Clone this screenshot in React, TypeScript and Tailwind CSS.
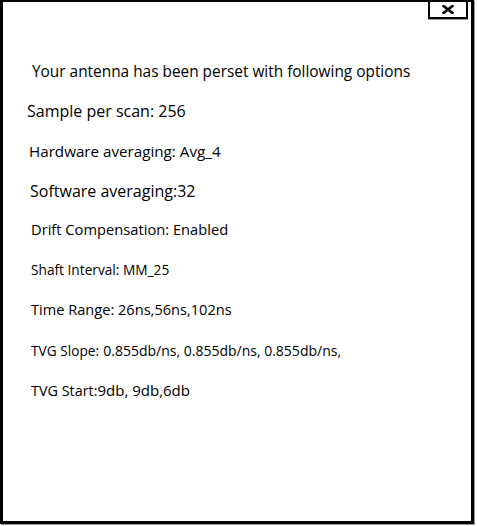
const rows: { text: React.ReactNode; cls: string }[] = [
    { text: "Your antenna has been perset with following options", cls: "h-[38px] pl-[29px] text-[15.4px]" },
    { text: "Sample per scan: 256", cls: "h-[40px] pl-[24px] text-[16px]" },
    { text: "Hardware averaging: Avg_4", cls: "h-[41px] pl-[26px] text-[15.2px]" },
    { text: "Software averaging:32", cls: "h-[38px] pl-[27px] text-[16px]" },
    { text: "Drift Compensation: Enabled", cls: "h-[39px] pl-[28px] text-[14.7px]" },
    { text: "Shaft Interval: MM_25", cls: "h-[42px] pl-[28px] text-[13.7px]" },
    { text: "Time Range: 26ns,56ns,102ns", cls: "h-[38px] pl-[28px] text-[14.6px]" },
    {
        text: (
            <>
                <span className="text-[13.7px]">TVG Slope:</span>{" "}
                <span className="text-[14px]">0.855db/ns, 0.855db/ns, 0.855db/ns,</span>
            </>
        ),
        cls: "h-[41px] pl-[28px]",
    },
    {
        text: (
            <>
                <span className="text-[14.4px]">TVG Start:</span>
                <span className="text-[15px]">9db, 9db,6db</span>
            </>
        ),
        cls: "h-[40px] pl-[28px]",
    },
];

export default function App() {
    return (
        <div className="relative w-[477px] h-[526px] bg-white font-['Open_Sans','Noto_Sans',sans-serif] text-black">
            <div className="w-[474px] h-[524px] border-l-[3px] border-r-[3px] border-b-[3px] border-t-2 border-black shadow-[1px_1px_0_#9a9a9a] pt-[51px]">
                {rows.map((r, i) => (
                    <div key={i} className={`flex items-center whitespace-pre ${r.cls}`}>
                        <span>{r.text}</span>
                    </div>
                ))}
            </div>
            {/* close button */}
            <div className="absolute top-0 left-[428px] w-[40px] h-[19px] bg-white border-2 border-black shadow-[0_1px_0_#9a9a9a] flex items-center justify-center">
                <svg width="12" height="9" viewBox="0 0 12 9">
                    <path d="M1.5 1 L10.5 8 M10.5 1 L1.5 8" stroke="black" strokeWidth="2.6" strokeLinecap="square" />
                </svg>
            </div>
        </div>
    );
}
